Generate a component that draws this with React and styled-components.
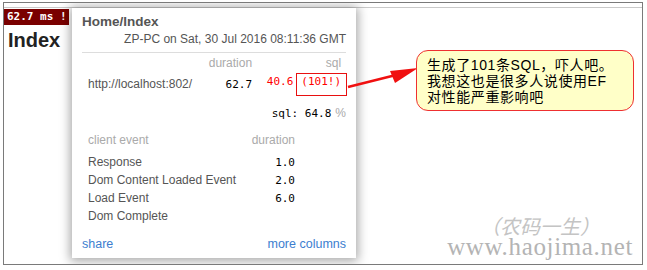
import React from "react";
import styled, { createGlobalStyle } from "styled-components";

const Global = createGlobalStyle`
  html, body { margin: 0; padding: 0; background: #fff; }
  body { font-family: "Liberation Sans", Arial, sans-serif; }
`;

const Frame = styled.div`
  position: relative;
  box-sizing: border-box;
  margin: 2px 0 0 3px;
  width: 640px;
  height: 263px;
  border: 1px solid #7a7a7a;
  overflow: hidden;
`;

const TopRule = styled.div`
  margin-top: 4px;
  border-top: 1px solid #c9c9c9;
`;

const Heading = styled.h1`
  margin: 20px 0 0 4px;
  font-size: 20px;
  line-height: 24px;
  font-weight: bold;
  color: #222;
`;

const Badge = styled.div`
  position: absolute;
  left: -1px;
  top: 6px;
  width: 66px;
  height: 16px;
  box-sizing: border-box;
  background: #7a0000;
  color: #fff;
  font-family: "DejaVu Sans Mono", "Liberation Mono", monospace;
  font-weight: bold;
  font-size: 11px;
  line-height: 16px;
  padding-left: 4px;
  white-space: pre;
`;

const Popup = styled.div`
  position: absolute;
  left: 68px;
  top: 5px;
  width: 284px;
  height: 250px;
  box-sizing: border-box;
  background: #fff;
  padding: 6px 10px 0 10px;
  box-shadow: 0 1px 10px 2px rgba(0, 0, 0, 0.35);
  color: #555;
  font-size: 12px;
`;

const Title = styled.div`
  font-size: 13.5px;
  font-weight: bold;
  line-height: 16px;
  color: #555;
`;

const Sub = styled.div`
  margin-top: 1px;
  text-align: right;
  line-height: 16px;
`;

const Rule = styled.div`
  margin-top: 5px;
  border-top: 1px solid #ddd;
`;

const Table = styled.div`
  display: grid;
  grid-template-columns: ${(p) => p.$cols};
  padding: 0 ${(p) => p.$padRight || 0}px 0 6px;
  margin-top: ${(p) => p.$mt || 0}px;
  row-gap: ${(p) => p.$rowGap || 0}px;
`;

const Head = styled.div`
  color: #aaa;
  line-height: 16px;
  text-align: ${(p) => (p.$right ? "right" : "left")};
`;

const Cell = styled.div`
  height: ${(p) => p.$lh || 16}px;
  line-height: ${(p) => p.$lh || 16}px;
  text-align: ${(p) => (p.$right ? "right" : "left")};
  white-space: nowrap;
`;

const Mono = styled.span`
  font-family: "DejaVu Sans Mono", "Liberation Mono", monospace;
  font-size: 11px;
  line-height: 1;
  color: ${(p) => p.$color || "#000"};
`;

const SqlGroup = styled.div`
  display: flex;
  justify-content: flex-end;
  align-items: baseline;
  gap: 8px;
  line-height: 16px;
`;

const SqlTotal = styled.div`
  margin-top: 13px;
  text-align: right;
  line-height: 16px;
`;

const Pct = styled.span`
  color: #aaa;
  margin-left: 4px;
`;

const Footer = styled.div`
  margin-top: 11px;
  display: flex;
  justify-content: space-between;
  font-size: 12.5px;
  line-height: 16px;
  color: #3c7ecf;
`;

const RedBox = styled.div`
  position: absolute;
  left: 292px;
  top: 70px;
  width: 51px;
  height: 23px;
  box-sizing: border-box;
  border: 1.5px solid #e81010;
`;

const Arrow = styled.svg`
  position: absolute;
  left: 340px;
  top: 57px;
`;

const Callout = styled.div`
  position: absolute;
  left: 412px;
  top: 47px;
  width: 218px;
  height: 61px;
  box-sizing: border-box;
  border: 1px solid #ee3030;
  border-radius: 12px;
  background: #ffffc8;
  padding: 6px 0 0 10px;
  font-family: "Liberation Sans", "Noto Sans CJK SC", sans-serif;
  font-size: 14px;
  letter-spacing: 0.6px;
  line-height: 16px;
  color: #000;
`;

const Watermark = styled.div`
  position: absolute;
  right: 9px;
  bottom: 4px;
  display: flex;
  flex-direction: column;
  align-items: center;
  color: #b4b4b4;
`;

const WmCn = styled.div`
  font-family: "Liberation Sans", "Noto Sans CJK SC", sans-serif;
  font-style: italic;
  font-size: 20px;
  line-height: 21px;
  margin-bottom: -4px;
  color: #c4c4c4;
`;

const WmUrl = styled.div`
  font-family: "Liberation Serif", serif;
  font-size: 25px;
  line-height: 26px;
  letter-spacing: 0.65px;
`;

export default function App() {
  return (
    <>
      <Global />
      <Frame>
        <TopRule />
        <Heading>Index</Heading>
        <Badge>62.7 ms !</Badge>
        <Popup>
          <Title>Home/Index</Title>
          <Sub>ZP-PC on Sat, 30 Jul 2016 08:11:36 GMT</Sub>
          <Rule />
          <Table $cols="1fr 60px 89px" $padRight={7} $mt={2} $rowGap={5}>
            <Head />
            <Head $right>duration</Head>
            <Head $right>sql</Head>
            <Cell>http://localhost:802/</Cell>
            <Cell $right>
              <Mono>62.7</Mono>
            </Cell>
            <SqlGroup>
              <Mono $color="#f00">40.6</Mono>
              <Mono $color="#f00">(101!)</Mono>
            </SqlGroup>
          </Table>
          <SqlTotal>
            <Mono>sql: 64.8</Mono>
            <Pct>%</Pct>
          </SqlTotal>
          <Table $cols="160px 47px" $mt={11}>
            <Head>client event</Head>
            <Head $right>duration</Head>
          </Table>
          <Table $cols="160px 47px" $mt={5}>
            <Cell $lh={18}>Response</Cell>
            <Cell $lh={18} $right>
              <Mono>1.0</Mono>
            </Cell>
            <Cell $lh={18}>Dom Content Loaded Event</Cell>
            <Cell $lh={18} $right>
              <Mono>2.0</Mono>
            </Cell>
            <Cell $lh={18}>Load Event</Cell>
            <Cell $lh={18} $right>
              <Mono>6.0</Mono>
            </Cell>
            <Cell $lh={18}>Dom Complete</Cell>
            <Cell $lh={18} />
          </Table>
          <Footer>
            <span>share</span>
            <span>more columns</span>
          </Footer>
        </Popup>
        <RedBox />
        <Arrow width="80" height="40" viewBox="0 0 80 40">
          <line x1="4" y1="27" x2="52" y2="15" stroke="#f01010" strokeWidth="2.5" />
          <polygon points="74,8 46,11 51,23" fill="#f01010" />
        </Arrow>
        <Callout>
          生成了101条SQL，吓人吧。
          <br />
          我想这也是很多人说使用EF
          <br />
          对性能严重影响吧
        </Callout>
        <Watermark>
          <WmCn>（农码一生）</WmCn>
          <WmUrl>www.haojima.net</WmUrl>
        </Watermark>
      </Frame>
    </>
  );
}
